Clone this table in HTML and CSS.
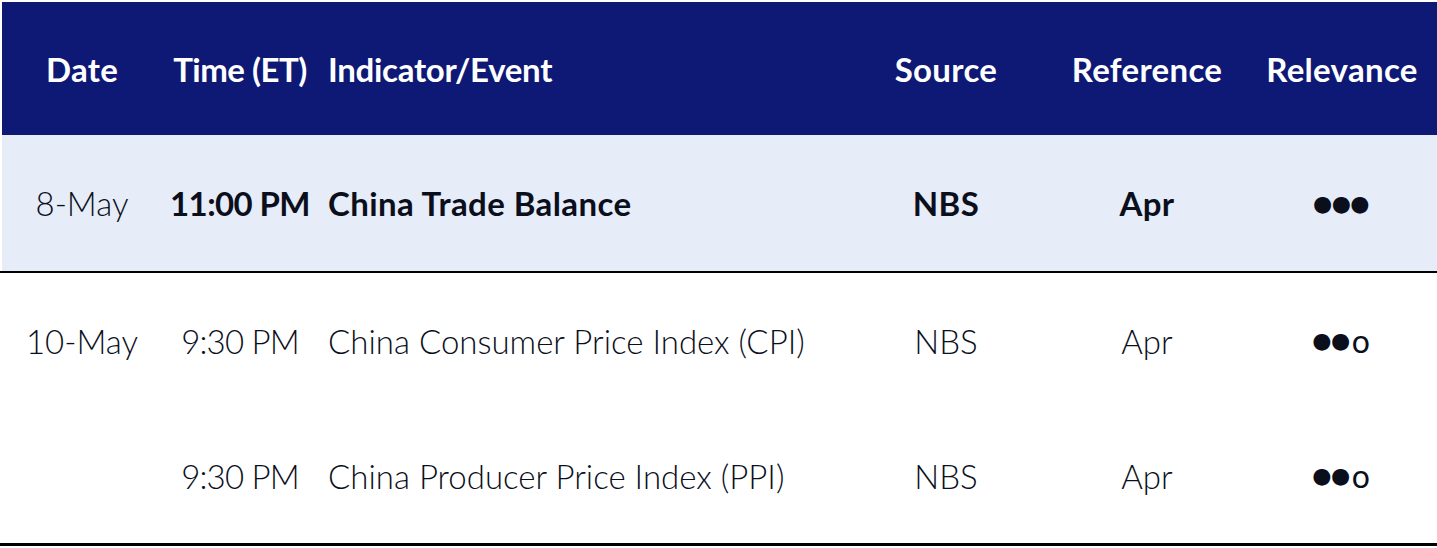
FILE: index.html
```html
<!DOCTYPE html>
<html lang="en">
<head>
<meta charset="utf-8">
<title>Economic Calendar</title>
<link rel="stylesheet" href="styles.css">
</head>
<body>
<div class="table">
  <div class="row head">
    <div class="cell c">Date</div>
    <div class="cell c time">Time (ET)</div>
    <div class="cell l ind">Indicator/Event</div>
    <div class="cell c">Source</div>
    <div class="cell c">Reference</div>
    <div class="cell c">Relevance</div>
  </div>
  <div class="row hl">
    <div class="cell c">8-May</div>
    <div class="cell c b time">11:00 PM</div>
    <div class="cell l b">China Trade Balance</div>
    <div class="cell c b">NBS</div>
    <div class="cell c b">Apr</div>
    <div class="cell c dots">●●●</div>
  </div>
  <div class="rule"></div>
  <div class="row">
    <div class="cell c">10-May</div>
    <div class="cell c time">9:30 PM</div>
    <div class="cell l">China Consumer Price Index (CPI)</div>
    <div class="cell c">NBS</div>
    <div class="cell c">Apr</div>
    <div class="cell c dots">●●<span class="o">o</span></div>
  </div>
  <div class="row">
    <div class="cell c"></div>
    <div class="cell c time">9:30 PM</div>
    <div class="cell l">China Producer Price Index (PPI)</div>
    <div class="cell c">NBS</div>
    <div class="cell c">Apr</div>
    <div class="cell c dots">●●<span class="o">o</span></div>
  </div>
  <div class="rule bottom"></div>
</div>
</body>
</html>
```
FILE: styles.css
```css
html, body {
  margin: 0;
  padding: 0;
  background: #ffffff;
}
body {
  font-family: Lato, "Open Sans", sans-serif;
  color: #0b0f1c;
}
.table {
  padding-top: 2px;
  width: 1437px;
}
.row {
  display: grid;
  grid-template-columns: 160px 156px 528px 200px 202px 188px;
  height: 135px;
  margin-left: 2px;
  font-size: 33px;
  font-weight: 300;
  letter-spacing: 0;
}
.head {
  height: 133px;
  background: #0e1875;
  color: #ffffff;
  font-weight: 700;
  letter-spacing: 0.3px;
}
.hl {
  height: 136px;
  background: #e6ecf8;
}
.cell {
  display: flex;
  align-items: center;
  white-space: nowrap;
}
.cell.c { justify-content: center; }
.cell.l { justify-content: flex-start; padding-left: 10px; }
.cell.b { font-weight: 700; letter-spacing: 0.4px; }
.cell.time { letter-spacing: -0.8px; }
.head .cell.time { letter-spacing: -0.5px; }
.head .cell.ind { letter-spacing: -0.3px; }
.hl .cell.time { letter-spacing: -0.6px; }
.dots {
  font-family: "DejaVu Sans", sans-serif;
  font-size: 22px;
  font-weight: 400;
  letter-spacing: -0.5px;
  padding-right: 2px;
}
.dots .o {
  font-family: Lato, sans-serif;
  font-size: 32px;
  font-weight: 400;
  letter-spacing: 0;
  margin-left: 2px;
}
.rule {
  height: 2px;
  background: #000000;
}
.rule.bottom {
  height: 3px;
}
```
